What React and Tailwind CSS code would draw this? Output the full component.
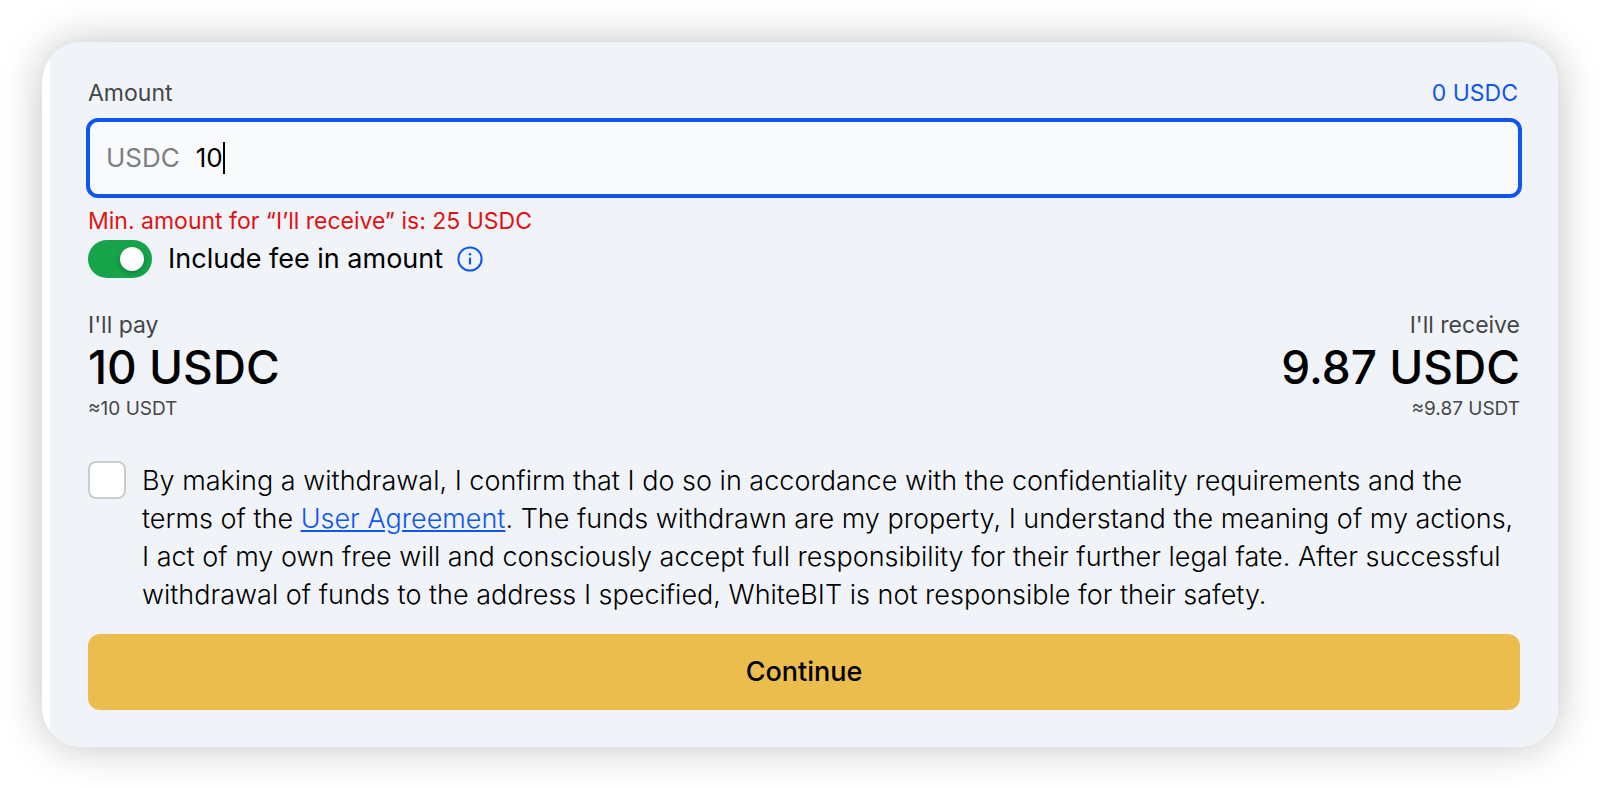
import React, { useState } from 'react';

const Summary = ({ title, value, approx, align }) => (
  <div className={align === 'right' ? 'text-right' : 'text-left'}>
    <p className="text-[23px] leading-[30px] text-[#444648]">{title}</p>
    <p className="mt-[3px] mb-[5px] text-[46px] leading-[48px] font-medium">{value}</p>
    <p className="text-[19px] leading-[26px] text-[#444648]">{approx}</p>
  </div>
);

const App = () => {
  const [amount, setAmount] = useState('10');
  const [includeFee, setIncludeFee] = useState(true);
  const [agreed, setAgreed] = useState(false);

  return (
    <main className="min-h-screen bg-white p-[42px] pb-10 font-['Inter',sans-serif] text-black">
      <div className="overflow-hidden rounded-[40px] bg-white pl-2 shadow-[0_0_42px_rgba(0,0,0,0.24)]">
        <form onSubmit={e => e.preventDefault()} className="bg-[#f0f4f9] px-[38px] pt-9 pb-[37px]">
          <div className="flex items-center justify-between text-[23px] leading-[30px]">
            <label htmlFor="amount" className="text-[#444648]">Amount</label>
            <button type="button" className="pr-0.5 text-[#0f56f0]">0 USDC</button>
          </div>

          <label htmlFor="amount" className="-mx-0.5 mt-[10px] flex h-20 cursor-text items-center rounded-xl border-4 border-[#0f56f0] bg-[#f8fafc] px-4 text-[26px] leading-[38px]">
            <span className="mr-4 text-[#7d7e82]">USDC</span>
            <input
              id="amount"
              type="text"
              inputMode="decimal"
              value={amount}
              onChange={e => setAmount(e.target.value)}
              className="field-sizing-content bg-transparent caret-transparent outline-none"
            />
            <span className="h-8 w-0.5 bg-black" />
          </label>

          <p className="mt-2 text-[23px] leading-[30px] text-[#e01212]">Min. amount for “I’ll receive” is: 25 USDC</p>

          <div className="mt-1 flex items-center text-[27px] leading-[38px]">
            <label className="flex cursor-pointer items-center gap-4">
              <span className="relative flex">
                <input
                  type="checkbox"
                  role="switch"
                  checked={includeFee}
                  onChange={e => setIncludeFee(e.target.checked)}
                  className="peer h-[38px] w-16 appearance-none rounded-full bg-gray-400 checked:bg-[#16a34a]"
                />
                <span className="pointer-events-none absolute top-[7px] left-2 size-6 rounded-full bg-white shadow-[0_2px_4px_rgba(0,0,0,0.25)] peer-checked:left-8" />
              </span>
              <span>Include fee in amount</span>
            </label>
            <button type="button" aria-label="Fee info" className="ml-3.5">
              <svg viewBox="0 0 26 26" className="size-[26px]" fill="none" stroke="#0f56f0" strokeWidth="2">
                <circle cx="13" cy="13" r="11.6" />
                <path d="M13 12.6v5" strokeWidth="2.2" strokeLinecap="round" />
                <circle cx="13" cy="8.2" r="1.3" fill="#0f56f0" stroke="none" />
              </svg>
            </button>
          </div>

          <div className="mt-8 flex justify-between">
            <Summary title="I'll pay" value="10 USDC" approx="≈10 USDT" />
            <Summary title="I'll receive" value="9.87 USDC" approx="≈9.87 USDT" align="right" />
          </div>

          <div className="mt-[39px] flex items-start gap-4 text-[27px] leading-[38px]">
            <input
              id="agree"
              type="checkbox"
              checked={agreed}
              onChange={e => setAgreed(e.target.checked)}
              className="size-[38px] shrink-0 appearance-none rounded-lg border-2 border-[#cccccc] bg-white checked:bg-[#0f56f0]"
            />
            <label htmlFor="agree" className="pt-px font-light">
              By making a withdrawal, I confirm that I do so in accordance with the confidentiality requirements and the terms of the{' '}
              <a href="#user-agreement" className="text-[#0f56f0] underline">User Agreement</a>. The funds withdrawn are my property, I understand the meaning of my actions, I act of my own free will and consciously accept full responsibility for their further legal fate. After successful withdrawal of funds to the address I specified, WhiteBIT is not responsible for their safety.
            </label>
          </div>

          <button type="submit" className="mt-5 h-[76px] w-full rounded-xl bg-[#eabd4c] text-[27px] leading-[38px] font-medium">
            Continue
          </button>
        </form>
      </div>
    </main>
  );
};

export default App;
